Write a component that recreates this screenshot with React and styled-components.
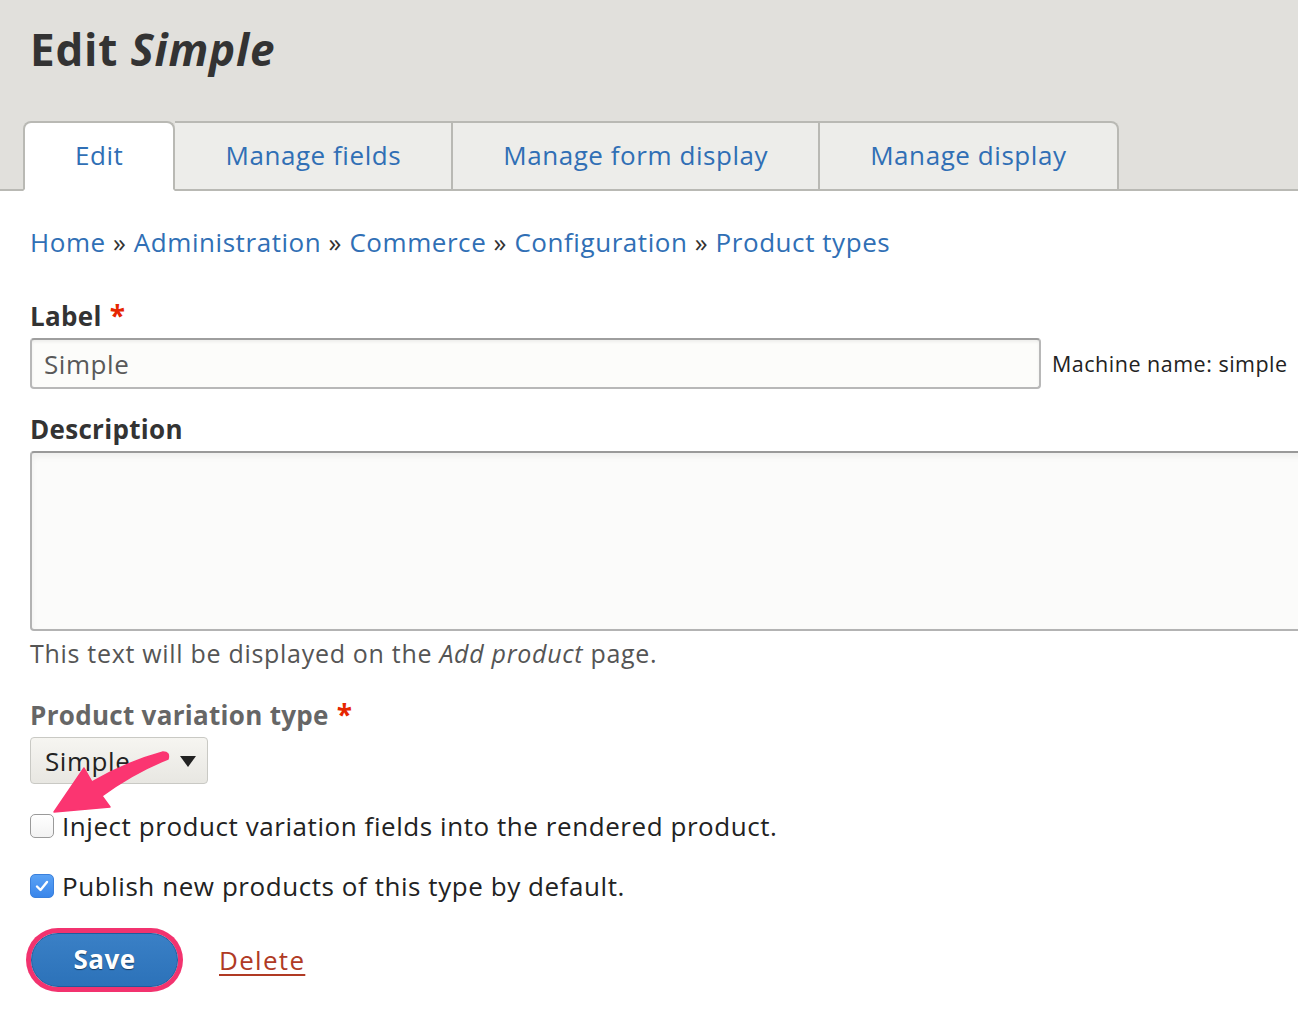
import React from 'react';
import styled, { createGlobalStyle } from 'styled-components';

const GlobalStyle = createGlobalStyle`
  html, body {
    margin: 0;
    padding: 0;
    background: #fff;
    overflow: hidden;
  }
  body {
    font-family: "Open Sans", "DejaVu Sans", sans-serif;
    color: #333;
    letter-spacing: 0.56px;
  }
`;

const Page = styled.div`
  position: relative;
  width: 1298px;
  min-height: 1016px;
`;

const Header = styled.header`
  background: #e1e0dc;
  border-bottom: 2px solid #b9b9b4;
  padding: 24px 0 0 23px;
`;

const Title = styled.h1`
  margin: 0 0 0 7px;
  font-size: 44px;
  line-height: 50px;
  font-weight: 700;
  letter-spacing: 0.8px;
  color: #333;
  em {
    font-style: italic;
  }
`;

const Tabs = styled.nav`
  display: flex;
  margin-top: 47px;
  margin-bottom: -2px;
`;

const Tab = styled.a`
  display: flex;
  align-items: center;
  justify-content: center;
  box-sizing: border-box;
  height: 70px;
  padding: 0 50px 2px;
  font-size: 26px;
  color: #306fb5;
  text-decoration: none;
  white-space: nowrap;
  background: ${p => (p.$active ? '#fff' : '#ededea')};
  border: 2px solid #b9b9b4;
  border-bottom: ${p => (p.$active ? '2px solid #fff' : '2px solid #b9b9b4')};
  border-left-width: ${p => (p.$first ? '2px' : '0')};
  border-radius: ${p => (p.$active ? '8px 8px 0 0' : p.$last ? '0 8px 0 0' : '0')};
`;

const Main = styled.main`
  padding: 0 30px;
`;

const Breadcrumb = styled.div`
  margin-top: 33px;
  font-size: 26px;
  line-height: 36px;
  color: #333;
  white-space: nowrap;
  a {
    color: #306fb5;
    text-decoration: none;
  }
`;

const Field = styled.div`
  margin-top: ${p => p.$gap || 24}px;
`;

const Label = styled.label`
  display: block;
  font-size: 26px;
  line-height: 36px;
  font-weight: 700;
  letter-spacing: 0.3px;
  color: ${p => (p.$muted ? '#666' : '#333')};
  margin-bottom: 4px;
`;

const Required = styled.span`
  color: #e62600;
  margin-left: 8px;
  font-size: 28px;
`;

const InputRow = styled.div`
  display: flex;
  align-items: center;
  gap: 11px;
`;

const TextInput = styled.div`
  box-sizing: border-box;
  flex-shrink: 0;
  width: 1011px;
  height: 51px;
  padding: 0 12px;
  display: flex;
  align-items: center;
  font-size: 26px;
  color: #595959;
  background: #fcfcfa;
  border: 2px solid #b8b8b8;
  border-top-color: #9e9e9e;
  border-radius: 4px;
  box-shadow: inset 0 2px 3px rgba(0, 0, 0, 0.06);
`;

const MachineName = styled.span`
  flex-shrink: 0;
  font-size: 21.5px;
  letter-spacing: 0.5px;
  color: #222;
  white-space: nowrap;
`;

const TextArea = styled.div`
  box-sizing: border-box;
  width: 1300px;
  height: 180px;
  background: #fbfbfa;
  border: 2px solid #b3b3b3;
  border-top-color: #999;
  border-radius: 4px 0 0 4px;
  box-shadow: inset 0 4px 6px rgba(0, 0, 0, 0.05);
`;

const Help = styled.p`
  margin: 6px 0 0;
  font-size: 25px;
  letter-spacing: 0.7px;
  line-height: 32px;
  color: #555;
`;

const Select = styled.div`
  box-sizing: border-box;
  width: 178px;
  height: 47px;
  display: flex;
  align-items: center;
  justify-content: space-between;
  padding: 0 11px 0 14px;
  font-size: 26px;
  color: #222;
  background: linear-gradient(#f6f5f1, #e8e7e2);
  border: 1px solid #c9c9c4;
  border-radius: 4px;
`;

const Caret = styled.span`
  width: 0;
  height: 0;
  border-left: 8px solid transparent;
  border-right: 8px solid transparent;
  border-top: 11px solid #222;
  margin-top: 2px;
`;

const CheckRow = styled.label`
  display: flex;
  align-items: center;
  gap: 8px;
  margin-top: ${p => p.$gap}px;
  font-size: 26px;
  line-height: 36px;
  color: #222;
`;

const Box = styled.span`
  box-sizing: border-box;
  width: 24px;
  height: 24px;
  border-radius: 5px;
  display: flex;
  align-items: center;
  justify-content: center;
  flex-shrink: 0;
  background: ${p => (p.$checked ? 'linear-gradient(#5aa2f5, #3a86ea)' : 'linear-gradient(#fff, #f2f2f2)')};
  border: ${p => (p.$checked ? '1px solid #3a80dc' : '1.5px solid #9a9a9a')};
`;

const Actions = styled.div`
  display: flex;
  align-items: center;
  gap: 41px;
  margin-top: 29px;
  padding-left: 1px;
`;

const SaveButton = styled.button`
  box-sizing: border-box;
  width: 147px;
  height: 54px;
  border-radius: 27px;
  border: 1px solid #1f5c9d;
  background: linear-gradient(#3a80c6, #2c72b9);
  color: #fff;
  font-family: inherit;
  font-size: 26px;
  font-weight: 700;
  letter-spacing: 0.5px;
  text-shadow: 0 1px 1px rgba(0, 0, 0, 0.5);
  box-shadow: 0 0 0 5px #f2336f;
  padding: 0 0 2px;
`;

const DeleteLink = styled.a`
  font-size: 26px;
  letter-spacing: 1.3px;
  color: #b03a24;
  text-decoration: underline;
  text-underline-offset: 4px;
`;

const Annotation = styled.svg`
  position: absolute;
  left: 40px;
  top: 740px;
  width: 140px;
  height: 80px;
  pointer-events: none;
`;

export default function App() {
  return (
    <Page>
      <GlobalStyle />
      <Header>
        <Title>
          Edit <em>Simple</em>
        </Title>
        <Tabs>
          <Tab $active $first>Edit</Tab>
          <Tab>Manage fields</Tab>
          <Tab>Manage form display</Tab>
          <Tab $last>Manage display</Tab>
        </Tabs>
      </Header>
      <Main>
        <Breadcrumb>
          <a>Home</a> » <a>Administration</a> » <a>Commerce</a> » <a>Configuration</a> » <a>Product types</a>
        </Breadcrumb>

        <Field $gap={37}>
          <Label>
            Label<Required>*</Required>
          </Label>
          <InputRow>
            <TextInput>Simple</TextInput>
            <MachineName>Machine name: simple</MachineName>
          </InputRow>
        </Field>

        <Field $gap={22}>
          <Label>Description</Label>
          <TextArea />
          <Help>
            This text will be displayed on the <em>Add product</em> page.
          </Help>
        </Field>

        <Field $gap={27}>
          <Label $muted>
            Product variation type<Required>*</Required>
          </Label>
          <Select>
            Simple
            <Caret />
          </Select>
        </Field>

        <CheckRow $gap={24}>
          <Box />
          Inject product variation fields into the rendered product.
        </CheckRow>
        <CheckRow $gap={24}>
          <Box $checked>
            <svg width="16" height="16" viewBox="0 0 16 16">
              <path d="M3 8.5 L6.5 12 L13 4" fill="none" stroke="#fff" strokeWidth="2.4" strokeLinecap="round" strokeLinejoin="round" />
            </svg>
          </Box>
          Publish new products of this type by default.
        </CheckRow>

        <Actions>
          <SaveButton>Save</SaveButton>
          <DeleteLink>Delete</DeleteLink>
        </Actions>
      </Main>

      <Annotation viewBox="40 740 140 80">
        <path
          d="M54 812 L84 768 L92 782 Q126 762 163 752 Q170 752 168 759 Q133 773 102 796 L110 807 Z"
          fill="#fb3571"
          stroke="#fb3571"
          strokeWidth="1.5"
          strokeLinejoin="round"
        />
      </Annotation>
    </Page>
  );
}
